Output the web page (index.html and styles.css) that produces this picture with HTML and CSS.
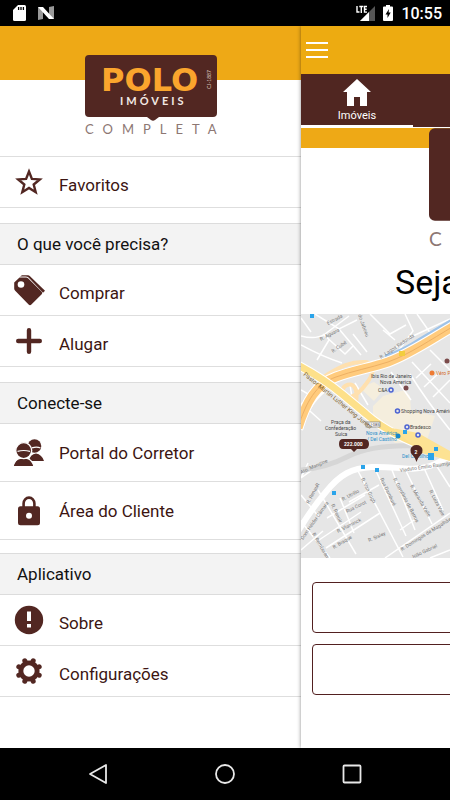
FILE: index.html
```html
<!DOCTYPE html>
<html lang="pt-BR">
<head>
<meta charset="utf-8">
<meta name="viewport" content="width=device-width, initial-scale=1">
<title>Polo Imóveis</title>
<link rel="stylesheet" href="styles.css">
</head>
<body>
<header class="status">
  <svg width="13" height="16" viewBox="0 0 13 16"><path fill="#fff" d="M5 0h6.500a1.500 1.500 0 0 1 1.500 1.500v13a1.500 1.500 0 0 1-1.500 1.500h-10A1.500 1.500 0 0 1 0 14.500V5z"/><path stroke="#000" stroke-width="1.300" d="M5.600 2v3M8 2v3M10.400 2v3"/></svg>
  <svg width="16" height="14" viewBox="0 0 16 14"><path fill="#999" d="M0 1l5 1v11l-5 1zM16 0l-5 1v11l5 1z"/><path fill="#fff" d="M0 1h5l11 12h-5z"/></svg>
  <span class="grow"></span>
  <svg width="19" height="17" viewBox="0 0 19 17"><path fill="#555" d="M19 1v15H4z"/><path fill="#fff" d="M13 7v9H4z"/><path fill="none" stroke="#fff" stroke-width="1.400" d="M1 1v6h2.500M3.300 1.500h4M5.300 1.500V8M11 1.500H8.500v5.600H11M8.500 4.200h2.200"/></svg>
  <svg width="10" height="16" viewBox="0 0 10 16"><path fill="#fff" d="M3 0h4v1.500h2a1 1 0 0 1 1 1V15a1 1 0 0 1-1 1H1a1 1 0 0 1-1-1V2.500a1 1 0 0 1 1-1h2z"/><path fill="#000" d="M6 4L2.500 9.500h2V13l3.200-5.500H5.600z"/></svg>
  <time class="clock">10:55</time>
</header>

<div class="app">
  <nav class="drawer">
    <div class="brand">
      <svg class="logo" viewBox="0 0 132 82">
        <path fill="#522722" d="M4 0h124a4 4 0 0 1 4 4v54a4 4 0 0 1-4 4H74l-4 3q-2 1.500-4 0l-4-3H4a4 4 0 0 1-4-4V4a4 4 0 0 1 4-4z"/>
        <text class="logo-polo" x="16" y="36">POLO</text>
        <text class="logo-sub" x="35" y="50">IMÓVEIS</text>
        <text class="logo-code" transform="translate(126 34) rotate(-90)">CJ-1887</text>
        <text class="logo-tag" x="0" y="79">COMPLETA</text>
      </svg>
    </div>
    <ul class="list">
      <li><a class="item" href="#"><svg class="icon" viewBox="0 0 32 32"><path fill="none" stroke="#522722" stroke-width="2.400" d="M16 5.500l2.900 7.400 7.900.5-6.100 5.100 2 7.700-6.700-4.300-6.700 4.300 2-7.700-6.100-5.100 7.900-.5z"/></svg><span>Favoritos</span></a></li>
    </ul>
    <h2 class="divider">O que você precisa?</h2>
    <ul class="list">
      <li><a class="item" href="#"><svg class="icon" viewBox="0 0 32 32"><path fill="#522722" d="M6.500 3.600H13q1.300 0 2.300 1l13.400 13.200q1.200 1.200 0 2.400l-10.300 10.300q-1.400 1.400-2.800 0L2.200 16.700Q1.200 15.700 1.200 14.500V8.500z"/><circle cx="8" cy="10.500" r="3.300" fill="#fff"/><path fill="#522722" d="M7 2.600l2-1.400h6q1 0 2 1L32 16.700l-2 2L17 5q-2-2.400-4-2.400z"/></svg><span>Comprar</span></a></li>
      <li><a class="item" href="#"><svg class="icon" viewBox="0 0 32 32"><path stroke="#522722" stroke-width="4.400" stroke-linecap="round" d="M16 5.200v21.600M5.200 16h21.600"/></svg><span>Alugar</span></a></li>
    </ul>
    <h2 class="divider">Conecte-se</h2>
    <ul class="list roomy">
      <li><a class="item" href="#"><svg class="icon" viewBox="0 0 32 32"><circle cx="21.500" cy="9" r="6.800" fill="#522722"/><path fill="#522722" d="M16 24q1-7 7-7.500 6 1 8 7.500z"/><path fill="#522722" stroke="#fff" stroke-width="1.200" d="M0 29.600q2-7.300 7-8.200h7q5 1 7 8.200z"/><circle cx="10.700" cy="13.600" r="8" fill="#522722" stroke="#fff" stroke-width="1.400"/><path stroke="#fff" stroke-width="1.200" fill="none" d="M4.500 14.300q6.200-1.600 12.500 0M19 10.800q5-1.300 8.500.2"/></svg><span>Portal do Corretor</span></a></li>
      <li><a class="item" href="#"><svg class="icon" viewBox="0 0 32 32"><path fill="none" stroke="#522722" stroke-width="2.600" d="M10.600 12V8.500a5.400 5.900 0 0 1 10.800 0V12"/><rect x="5" y="11.300" width="22" height="19" rx="2.500" fill="#522722"/><circle cx="16" cy="20.700" r="3" fill="#fff"/></svg><span>Área do Cliente</span></a></li>
    </ul>
    <h2 class="divider">Aplicativo</h2>
    <ul class="list">
      <li><a class="item" href="#"><svg class="icon" viewBox="0 0 32 32"><circle cx="16" cy="16" r="14.200" fill="#522722"/><path fill="#fff" d="M14 7.500h4v9.500h-4zM14 20h4v3.600h-4z"/></svg><span>Sobre</span></a></li>
      <li><a class="item" href="#"><svg class="icon" viewBox="0 0 32 32"><circle cx="16" cy="16" r="8.100" fill="none" stroke="#522722" stroke-width="5"/><g stroke="#522722" stroke-width="5" stroke-linecap="round"><path d="M11.800 5.800l8.400 20.400M20.200 5.800l-8.400 20.400M5.800 11.800l20.400 8.400M5.800 20.200l20.400-8.400"/></g><circle cx="16" cy="16" r="5.700" fill="#fff"/></svg><span>Configurações</span></a></li>
    </ul>
  </nav>

  <main class="page">
    <div class="toolbar">
      <button class="menu" aria-label="Menu"><svg width="22" height="16" viewBox="0 0 22 16"><path stroke="#fff" stroke-width="2" d="M0 1h22M0 8h22M0 15h22"/></svg></button>
    </div>
    <div class="tabs">
      <a class="tab" href="#"><svg width="28" height="27" viewBox="0 0 28 27"><path fill="#fff" d="M14 0l14 13h-4v14h-7v-9h-6v9H4V13H0z"/></svg><span>Imóveis</span></a>
    </div>
    <div class="hero">
      <svg class="hero-logo" viewBox="0 0 132 82">
        <path fill="#522722" d="M4 0h124a4 4 0 0 1 4 4v55a4 4 0 0 1-4 4H4a4 4 0 0 1-4-4V4a4 4 0 0 1 4-4z"/>
        <text class="logo-tag" x="0" y="80">C</text>
      </svg>
      <h1 class="welcome">Seja</h1>
    </div>
    <svg class="map" viewBox="301 314 149 244" preserveAspectRatio="xMinYMin slice">
      <rect x="301" y="314" width="400" height="244" fill="#e6e6e6"/>
      <path fill="#f5eedd" d="M373 406l10-10 22-6 5 6 1 14 24 6-8 24-32 3-22-22zM360 388l14-6 10 7-10 12z"/>
      <g fill="none" stroke="#fff" stroke-width="1.500">
        <path d="M301 336q15 4 24-2l24-18M323 334l22 20 8-8M301 318l10 14M315 314l24 15 18-9M339 329l22 26M329 340l-12 20M353 334l14 18M301 345q22 12 41 18M370 314l20 20 16-9M405 314l8 17-22 30M417 314l14 20M385 355l28-19 37-17M395 340l-12-10"/>
        <path d="M412 362l38 41M430 350l20 20M416 378l15-14M424 387l16-15M433 397l17-17M410 374q16 26 40 56M391 372l20 28M301 403l20 18M355 383l13 22M301 390l14 8M350 385l3 18"/>
        <path d="M301 478l21-15M308 463l-7 15M318 490l38 64M326 548l54-35M319 540l42-28M340 498l14 35M349 502l30-17M358 471l45 86M376 471l30 65M392 470l23 60M405 469l27 55M424 468l19 42M436 465l14 22M385 558l65-45M300 520l30 38M301 550l22-19M365 495l-38 23M400 530l17-12M430 558l20-8M301 495l18 22"/>
      </g>
      <path fill="none" stroke="#d6d6d6" stroke-width="5" d="M301 470q25-2 48-14t70-10"/>
      <path fill="none" stroke="#fff" stroke-width="6" d="M296 535C306 517 316 504 325 493C340 474 352 468 372 467C396 466 410 472 430 466C440 463 446 458 454 452"/>
      <path fill="none" stroke="#fff" stroke-width="4" d="M301 430C305 412 312 400 325 390"/>
      <path fill="none" stroke="#9fc3e8" stroke-width="3" d="M385 356C396 353 408 347 420 339L452 320"/>
      <path fill="none" stroke="#ffe0ae" stroke-width="4" d="M322 378C340 366 352 361 366 362C376 364 374 374 366 384C356 398 344 402 342 392C343 384 352 382 355 388C358 394 356 400 356 404"/>
      <path fill="none" stroke="#fff" stroke-width="11" d="M298 428C306 402 316 384 336 377C352 371 370 368 388 362C410 354 430 340 454 326"/>
      <path fill="none" stroke="#ffcb7d" stroke-width="9" d="M298 428C306 402 316 384 336 377C352 371 370 368 388 362C410 354 430 340 454 326"/>
      <path fill="none" stroke="#eeb063" stroke-width="1" d="M298 428C306 402 316 384 336 377C352 371 370 368 388 362C410 354 430 340 454 326"/>
      <path fill="none" stroke="#fff" stroke-width="9" d="M296 364C315 374 330 384 342 394L366 414C384 430 405 440 452 458"/>
      <path fill="none" stroke="#fde08a" stroke-width="7" d="M296 364C315 374 330 384 342 394L366 414C384 430 405 440 452 458"/>
      <path fill="#fde293" d="M392 428l26 5 32 18v10l-28-8z"/>
      <rect x="399" y="351" width="6" height="5" fill="#f3cd3e"/>
      <rect x="366" y="422" width="14" height="5" fill="#fff" stroke="#777" stroke-width=".7"/><text class="shield" x="367" y="426">RJ-085</text>
      <g class="road">
        <text transform="translate(328 325) rotate(-28)">Estrada</text>
        <text transform="translate(321 341) rotate(-28)">R. Aguara</text>
        <text transform="translate(333 353) rotate(-35)">R. Cubé</text>
        <text transform="translate(358 315) rotate(70)">do Jaboeu</text>
        <text transform="translate(381 359) rotate(-34)">R. Lagoa Redonda</text>
        <text transform="translate(301 474) rotate(-24)">Ato. Mangine</text>
        <text transform="translate(309 504) rotate(-62)">R. Renault</text>
        <text transform="translate(400 472) rotate(-8)">Viaduto Emílio Baumgart</text>
        <text transform="translate(343 501) rotate(-28)">R. Utrillo</text>
        <text transform="translate(347 513) rotate(-26)">Rua Corot</text>
        <text transform="translate(331 505) rotate(65)">R. Renoir</text>
        <text transform="translate(361 479) rotate(64)">R. Van Gogh</text>
        <text transform="translate(380 479) rotate(64)">Rua Darnburé</text>
        <text transform="translate(393 479) rotate(62)">R. Gerolânio de Barros</text>
        <text transform="translate(410 486) rotate(60)">R. Miranda Valle</text>
        <text transform="translate(429 491) rotate(63)">R. Luiza Vale</text>
        <text transform="translate(303 540) rotate(-55)">Dom Hélder Câmara</text>
        <text transform="translate(338 533) rotate(-27)">R. Vlaminck</text>
        <text transform="translate(334 549) rotate(-31)">R. Braque</text>
        <text transform="translate(369 542) rotate(-24)">R. Sisley</text>
        <text transform="translate(312 534) rotate(60)">R. Remberanch</text>
        <text transform="translate(402 551) rotate(-32)">R. Domingos de Magalhães</text>
        <text transform="translate(412 559) rotate(-25)">João Gabriel</text>
      </g>
      <text class="avenue" transform="translate(303 375) rotate(39)">Pastor Martin Luther King Junior</text>
      <g class="place">
        <text x="371" y="378">Ibis Rio de Janeiro</text><text x="380" y="384">Nova America</text><text x="378" y="392">C&amp;A</text>
        <text x="401" y="413">Shopping Nova América</text><text x="410" y="429">Bradesco</text>
        <text x="331" y="424">Praça da</text><text x="325" y="430">Confederação</text><text x="335" y="436">Suíca</text>
      </g>
      <g class="transit"><text x="366" y="435">Nova América</text><text x="367" y="441">/ Del Castilho</text><text x="402" y="458">Del Castilho</text></g>
      <text class="food" x="436" y="375">Véro Pizza</text>
      <g fill="#e6e6e6" stroke="#4c63d2" stroke-width="1.500"><circle cx="391" cy="390" r="2"/><circle cx="397.500" cy="411" r="2"/><circle cx="407" cy="427" r="2"/><circle cx="418" cy="435" r="2"/></g>
      <circle cx="406" cy="388" r="2.500" fill="#7b4b4b"/><circle cx="447" cy="361" r="2.500" fill="#7b4b4b"/><circle cx="432" cy="373" r="2.500" fill="#ee7b33"/><circle cx="398" cy="436" r="2.500" fill="#1588c9"/>
      <g fill="#2aa4ea"><path d="M310 314h4v4h-4zM361 465h4v4h-4zM375 468h4v4h-4zM332 491h4v4h-4zM403 430h4v4h-4zM434 447h4v4h-4zM428 453h6v7h-6z"/></g>
      <path fill="#522722" d="M343 439h21q5 0 5 5t-5 5h-7l-3 3-3-3h-8q-4 0-4-5t4-5z"/><text class="pin" x="344" y="446">222.000</text>
      <path fill="#522722" d="M416.500 462q-1-4-4-7-2.500-2.500-2-5a6 5 0 0 1 12 0q.5 2.500-2 5-3 3-4 7z"/><text class="pin" x="414.500" y="453.500">2</text>
    </svg>
    <div class="cards"><div class="card"></div><div class="card"></div></div>
  </main>
</div>

<footer class="sysnav">
  <button aria-label="Voltar"><svg width="20" height="22" viewBox="0 0 20 22"><path fill="none" stroke="#e8e8e8" stroke-width="1.800" stroke-linejoin="round" d="M18 2v18L2 11z"/></svg></button>
  <button aria-label="Início"><svg width="20" height="22" viewBox="0 0 20 22"><circle cx="10" cy="11" r="9" fill="none" stroke="#e8e8e8" stroke-width="1.800"/></svg></button>
  <button aria-label="Recentes"><svg width="20" height="22" viewBox="0 0 20 22"><rect x="1.500" y="2.500" width="17" height="17" rx="1" fill="none" stroke="#e8e8e8" stroke-width="1.800"/></svg></button>
</footer>
</body>
</html>
```
FILE: styles.css
```css
* { box-sizing: border-box; }

body {
  margin: 0;
  min-height: 100vh;
  display: flex;
  flex-direction: column;
  overflow-x: hidden;
  background: #fff;
  font-family: Roboto, "Liberation Sans", sans-serif;
}

button { padding: 0; border: 0; background: none; }
a { color: inherit; text-decoration: none; }
svg { display: block; }

.status {
  display: flex;
  align-items: center;
  gap: 8px;
  height: 26px;
  padding: 0 8px 0 13px;
  background: #000;
  color: #fff;
}
.status svg:nth-of-type(2) { margin-left: 4px; }
.grow { flex: 1; }
.clock { font-size: 16px; line-height: 24px; padding-top: 2px; font-weight: 500; }

.app { flex: 1; display: flex; }

.drawer { flex: 0 0 301px; }

.brand {
  height: 130px;
  padding-top: 29px;
  background: linear-gradient(#eea916 54px, #fff 54px);
}
.logo { width: 132px; height: 82px; margin: 0 auto; overflow: visible; }
.logo-polo { font: bold 32px "DejaVu Sans", sans-serif; fill: #fba52d; }
.logo-sub { font: bold 11px Lato, sans-serif; letter-spacing: 3px; fill: #f3e9e4; }
.logo-code { font: 5px Lato, sans-serif; fill: #d9c5bd; }
.logo-tag { font: 13px Lato, sans-serif; letter-spacing: 9px; fill: #8d7773; }

.list { margin: 0 0 15px; padding: 0; list-style: none; }
.brand + .list { border-top: 1px solid #dedede; }

.item {
  display: flex;
  align-items: center;
  gap: 14px;
  height: 51px;
  padding-left: 13px;
  border-bottom: 1px solid #dedede;
  color: #3c1512;
  font-size: 17px;
  line-height: 24px;
}
.item span { padding-top: 6px; }
.roomy { margin-bottom: 13px; }
.roomy .item { height: 58px; }
.roomy .item span { padding-top: 0; }
.icon { width: 32px; height: 32px; }

.divider {
  margin: 0;
  padding-left: 17px;
  border: solid #dcdcdc;
  border-width: 1px 0;
  background: #f3f3f3;
  color: #111;
  font-size: 17px;
  font-weight: 400;
  line-height: 40px;
}

.page {
  flex: 1;
  min-width: 0;
  overflow: hidden;
  background: #fff;
  box-shadow: 0 0 4px rgba(0, 0, 0, .45);
  clip-path: inset(0 0 0 -6px);
}

.toolbar { display: flex; align-items: center; height: 48px; padding-left: 5px; background: #edab11; }

.tabs { height: 54px; border-bottom: 1px solid #fff; background: #502621; }
.tab {
  display: flex;
  flex-direction: column;
  align-items: center;
  width: 112px;
  height: 53px;
  padding-top: 5px;
  border-bottom: 2px solid #fff;
  color: #fff;
  font-size: 11px;
  line-height: 19px;
}

.hero { height: 186px; background: linear-gradient(#eea916 20px, #fff 20px); }
.hero-logo { width: 194px; height: 121px; margin-left: 128px; overflow: visible; }
.welcome {
  margin: 12px 0 0 94px;
  font-size: 34px;
  font-weight: 400;
  line-height: 42px;
  color: #000;
}

.map { width: 100%; height: 244px; }
.road { font: 5px Roboto, sans-serif; fill: #777; }
.shield { font: 4px Roboto, sans-serif; fill: #444; }
.avenue { font: 6px Roboto, sans-serif; fill: #7c6230; }
.place { font: 5px Roboto, sans-serif; fill: #444; }
.transit { font: 5px Roboto, sans-serif; fill: #2b8fca; }
.food { font: 5px Roboto, sans-serif; fill: #d2691e; }
.pin { font: bold 5px Roboto, sans-serif; fill: #fff; }

.cards { display: grid; gap: 11px; margin: 24px -12px 0 11px; }
.card { height: 51px; border: 1px solid #522020; border-radius: 4px; }

.sysnav {
  display: flex;
  justify-content: center;
  align-items: center;
  gap: 107px;
  height: 52px;
  background: #000;
}
```
